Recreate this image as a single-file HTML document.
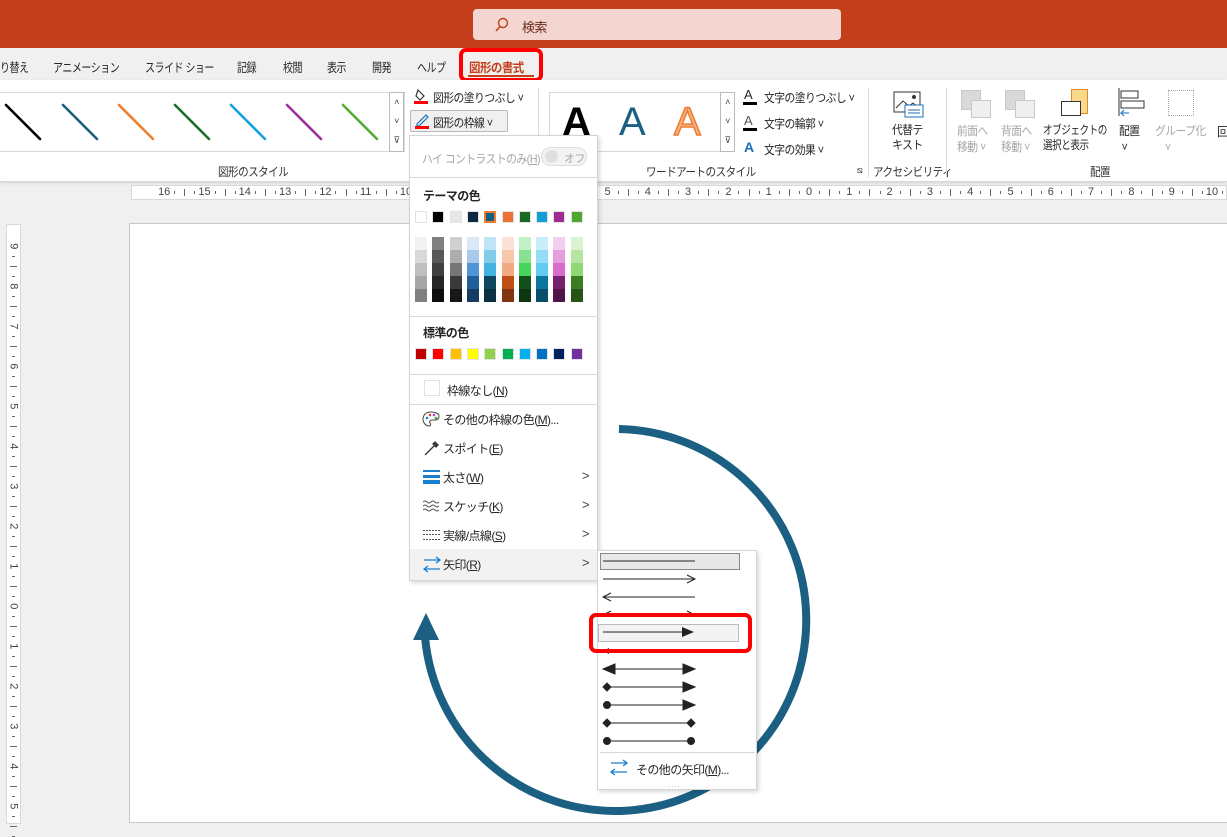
<!DOCTYPE html>
<html><head><meta charset="utf-8"><style>
*{margin:0;padding:0;box-sizing:border-box}
body{width:1227px;height:818px;overflow:hidden;background:#f0f0f0;font-family:"Liberation Sans","Noto Sans CJK JP",sans-serif;font-size:12px;color:#262626;position:relative;letter-spacing:-0.6px}
.a{position:absolute;white-space:nowrap}
.sx{transform:scaleX(.9);transform-origin:0 0}
.title{left:0;top:0;width:1227px;height:48px;background:#c43e1c}
.search{left:473px;top:9px;width:368px;height:31px;background:#f3d6cf;border-radius:4px}
.tabs{left:0;top:48px;width:1227px;height:32px;background:#f0f0f0}
.tab{top:57px;font-size:12.5px;color:#262626;transform:scaleX(.8);transform-origin:0 0}
.ribbon{left:0;top:80px;width:1227px;height:102px;background:#fff;border-bottom:1px solid #d8d8d8;box-shadow:0 1px 3px rgba(0,0,0,.12)}
.glabel{top:163px;font-size:12px;color:#333;transform:scaleX(.88);transform-origin:0 0}
.sep{top:88px;width:1px;height:90px;background:#dcdcdc}
.menu{left:409px;top:135px;width:189px;height:446px;background:#fff;border:1px solid #d4d4d4;box-shadow:2px 2px 4px rgba(0,0,0,.15)}
.mi{position:absolute;left:0;width:187px;height:29px;font-size:12px;color:#262626}
.mi span.t{position:absolute;left:34px;top:7px}
.chev{position:absolute;left:172px;top:6px;font-size:13px;color:#444}
.sw{position:absolute;width:12px;height:12px;border:1px solid #e2e2e2}
.sub{left:597px;top:550px;width:160px;height:240px;background:#fff;border:1px solid #d4d4d4;box-shadow:2px 2px 4px rgba(0,0,0,.15)}
.hr{position:absolute;height:1px;background:#d8d8d8}
.gray{color:#a6a6a6}
</style></head><body>
<div class="a title"></div>
<div class="a search"></div>
<svg class="a" style="left:494px;top:17px" width="16" height="16"><circle cx="9" cy="6" r="4.5" fill="none" stroke="#c43e1c" stroke-width="1.4"/><line x1="6" y1="9.5" x2="2" y2="14" stroke="#c43e1c" stroke-width="1.5"/></svg>
<div class="a" style="left:522px;top:17px;font-size:13px;color:#6b2a1c">検索</div>
<div class="a tabs"></div>
<div class="a tab" style="left:0">り替え</div>
<div class="a tab" style="left:53px">アニメーション</div>
<div class="a tab" style="left:145px">スライド ショー</div>
<div class="a tab" style="left:237px">記録</div>
<div class="a tab" style="left:283px">校閲</div>
<div class="a tab" style="left:327px">表示</div>
<div class="a tab" style="left:372px">開発</div>
<div class="a tab" style="left:417px">ヘルプ</div>
<div class="a" style="left:459px;top:48px;width:84px;height:34px;border:4px solid #ff0000;border-radius:7px"></div>
<div class="a" style="left:469px;top:57px;font-size:12.5px;font-weight:bold;color:#c43e1c;transform:scaleX(.92);transform-origin:0 0">図形の書式</div>
<div class="a" style="left:468px;top:75px;width:66px;height:2px;background:#c43e1c"></div>
<div class="a ribbon"></div>
<div class="a" style="left:0;top:92px;width:405px;height:60px;border:1px solid #d8d8d8;border-left:none"></div>
<svg class="a" style="left:0;top:95px" width="390" height="55">
<g stroke-width="2.6" stroke-linecap="round">
<line x1="6" y1="10" x2="40" y2="44" stroke="#000"/>
<line x1="63" y1="10" x2="97" y2="44" stroke="#1d5f82"/>
<line x1="119" y1="10" x2="153" y2="44" stroke="#ed7d31"/>
<line x1="175" y1="10" x2="209" y2="44" stroke="#1e6f2a"/>
<line x1="231" y1="10" x2="265" y2="44" stroke="#15a1dd"/>
<line x1="287" y1="10" x2="321" y2="44" stroke="#a0309a"/>
<line x1="343" y1="10" x2="377" y2="44" stroke="#56ad32"/></g></svg>
<div class="a" style="left:389px;top:92px;width:15px;height:60px;border:1px solid #bbb;background:#fff;font-size:9px;text-align:center;line-height:19px;color:#444">˄<br>˅<br>⊽</div>
<svg class="a" style="left:413px;top:87px" width="18" height="18"><path d="M5 3l6 6-4 4-4-4z" fill="none" stroke="#333" stroke-width="1.2"/><rect x="1" y="14" width="14" height="3" fill="#f00"/></svg>
<div class="a sx" style="left:433px;top:89px">図形の塗りつぶし ˅</div>
<div class="a" style="left:410px;top:110px;width:98px;height:22px;border:1px solid #b8b8b8;background:#f0f0f0;border-radius:2px"></div>
<svg class="a" style="left:414px;top:112px" width="18" height="18"><path d="M3 12L12 3l2 2-9 9H3z" fill="none" stroke="#1a6fb5" stroke-width="1.2"/><rect x="1" y="14" width="14" height="3" fill="#f00"/></svg>
<div class="a sx" style="left:433px;top:114px">図形の枠線 ˅</div>
<div class="a glabel" style="left:218px">図形のスタイル</div>
<div class="a sep" style="left:538px"></div>
<div class="a" style="left:549px;top:92px;width:185px;height:60px;border:1px solid #d8d8d8"></div>
<div class="a" style="left:562px;top:100px;font-size:40px;font-weight:bold;color:#000">A</div>
<div class="a" style="left:619px;top:100px;font-size:40px;color:#1d5f82">A</div>
<div class="a" style="left:674px;top:100px;font-size:40px;color:#f4b183;-webkit-text-stroke:1.5px #ed7d31">A</div>
<div class="a" style="left:720px;top:92px;width:15px;height:60px;border:1px solid #bbb;background:#fff;font-size:9px;text-align:center;line-height:19px;color:#444">˄<br>˅<br>⊽</div>
<div class="a" style="left:744px;top:87px;font-size:13px">A</div><div class="a" style="left:743px;top:102px;width:14px;height:3px;background:#000"></div>
<div class="a sx" style="left:764px;top:89px">文字の塗りつぶし ˅</div>
<div class="a" style="left:744px;top:113px;font-size:13px;color:#555">A</div><div class="a" style="left:743px;top:128px;width:14px;height:3px;background:#000"></div>
<div class="a sx" style="left:764px;top:115px">文字の輪郭 ˅</div>
<div class="a" style="left:744px;top:139px;font-size:14px;font-weight:bold;color:#1a6fb5">A</div>
<div class="a sx" style="left:764px;top:141px">文字の効果 ˅</div>
<div class="a glabel" style="left:646px">ワードアートのスタイル</div>
<div class="a" style="left:857px;top:165px;font-size:9px">⧅</div>
<div class="a sep" style="left:868px"></div>
<svg class="a" style="left:893px;top:90px" width="32" height="30"><rect x="1" y="2" width="26" height="20" fill="#fff" stroke="#333"/><path d="M3 18l7-7 6 5 4-3 6 5" fill="none" stroke="#333"/><circle cx="21" cy="7" r="2" fill="#333"/><rect x="12" y="15" width="18" height="12" fill="#fff" stroke="#1a6fb5"/><path d="M15 20h12M15 23h12" stroke="#1a6fb5"/></svg>
<div class="a sx" style="left:892px;top:123px;text-align:center;line-height:15px">代替テ<br>キスト</div>
<div class="a glabel" style="left:873px">アクセシビリティ</div>
<div class="a sep" style="left:946px"></div>
<div class="a" style="left:961px;top:90px;width:20px;height:20px;background:#d9d9d9;border:1px solid #c8c8c8"></div><div class="a" style="left:971px;top:100px;width:20px;height:18px;background:#efefef;border:1px solid #c8c8c8"></div>
<div class="a gray sx" style="left:957px;top:123px;line-height:16px">前面へ<br>移動 ˅</div>
<div class="a" style="left:1005px;top:90px;width:20px;height:20px;background:#d9d9d9;border:1px solid #c8c8c8"></div><div class="a" style="left:1015px;top:100px;width:20px;height:18px;background:#efefef;border:1px solid #c8c8c8"></div>
<div class="a gray sx" style="left:1001px;top:123px;line-height:16px">背面へ<br>移動 ˅</div>
<div class="a" style="left:1071px;top:89px;width:17px;height:25px;background:#fbd98a;border:1px solid #e08a2a"></div><div class="a" style="left:1061px;top:101px;width:20px;height:15px;background:#fff;border:1px solid #333"></div>
<div class="a" style="left:1043px;top:123px;line-height:15px;transform:scaleX(.8);transform-origin:0 0">オブジェクトの<br>選択と表示</div>
<svg class="a" style="left:1117px;top:88px" width="30" height="30"><path d="M2 0v28" stroke="#333"/><rect x="4" y="3" width="17" height="7" fill="#fff" stroke="#333"/><rect x="4" y="13" width="23" height="7" fill="#fff" stroke="#333"/><path d="M12 25H4l3-3M4 25l3 3" fill="none" stroke="#1a6fb5"/></svg>
<div class="a sx" style="left:1119px;top:123px;line-height:16px">配置<br>&nbsp;˅</div>
<div class="a" style="left:1168px;top:90px;width:26px;height:26px;border:1px dotted #aaa"></div>
<div class="a gray sx" style="left:1155px;top:123px;line-height:16px">グループ化<br>&nbsp;&nbsp;&nbsp;&nbsp;˅</div>
<div class="a" style="left:1217px;top:123px">回</div>
<div class="a glabel" style="left:1090px">配置</div>
<div class="a" style="left:131px;top:185px;width:1096px;height:15px;background:#fff;border:1px solid #d8d8d8;overflow:hidden" id="hr"></div>
<div class="a" style="left:6px;top:224px;width:15px;height:600px;background:#fff;border:1px solid #d8d8d8" id="vr"></div>
<div class="a" style="left:129px;top:223px;width:1100px;height:600px;background:#fff;border:1px solid #c8c8c8"></div>
<svg class="a" style="left:380px;top:400px" width="460" height="418">
<path d="M239 29 A191 191 0 1 1 45 237" fill="none" stroke="#1b5f82" stroke-width="8"/>
<path d="M33 240 L46 213 L59 240 Z" fill="#1b5f82"/>
</svg>
<div class="a menu">
<div class="a gray" style="left:12px;top:14px;transform:scaleX(.9);transform-origin:0 0">ハイ コントラストのみ(<u>H</u>)</div>
<div class="a" style="left:131px;top:11px;width:46px;height:19px;border:1px solid #ddd;border-radius:10px;background:#f3f3f3"></div>
<div class="a" style="left:135px;top:14px;width:13px;height:13px;border-radius:50%;background:#e0e0e0"></div>
<div class="a gray" style="left:154px;top:14px;font-size:11px">オフ</div>
<div class="hr" style="left:0;top:41px;width:187px"></div>
<div class="a" style="left:13px;top:51px;font-weight:bold">テーマの色</div>
<div id="sw"></div>
<div class="hr" style="left:0;top:180px;width:187px"></div>
<div class="a" style="left:13px;top:188px;font-weight:bold">標準の色</div>
<div class="hr" style="left:0;top:238px;width:187px"></div>
<div class="sw" style="left:14px;top:244px;width:16px;height:16px"></div>
<div class="a" style="left:37px;top:246px">枠線なし(<u>N</u>)</div>
<div class="hr" style="left:0;top:268px;width:187px"></div>
<div class="mi" style="top:268px"><svg class="a" style="left:12px;top:6px" width="18" height="18"><path d="M9 2C4 2 1 5 1 9c0 4 3 7 6 7 2 0 2-2 1-3s0-3 2-3h3c3 0 4-2 4-4 0-2-3-4-8-4z" fill="none" stroke="#444"/><circle cx="5" cy="8" r="1.3" fill="#1a7fcf"/><circle cx="8" cy="5" r="1.3" fill="#e04040"/><circle cx="12" cy="5" r="1.3" fill="#c040c0"/><circle cx="14" cy="8" r="1.3" fill="#40a040"/></svg><span class="t" style="left:33px">その他の枠線の色(<u>M</u>)...</span></div>
<div class="mi" style="top:297px"><svg class="a" style="left:13px;top:6px" width="18" height="18"><path d="M2 16l9-9M11 4l3 3M12 3l3 3-2 2-3-3z" stroke="#333" fill="none" stroke-width="1.3"/></svg><span class="t" style="left:33px">スポイト(<u>E</u>)</span></div>
<div class="mi" style="top:326px"><svg class="a" style="left:13px;top:7px" width="18" height="16"><rect x="0" y="1" width="17" height="2" fill="#1a7fcf"/><rect x="0" y="6" width="17" height="3" fill="#1a7fcf"/><rect x="0" y="11" width="17" height="4" fill="#1a7fcf"/></svg><span class="t" style="left:33px">太さ(<u>W</u>)</span><span class="chev">&gt;</span></div>
<div class="mi" style="top:355px"><svg class="a" style="left:13px;top:9px" width="18" height="12"><path d="M0 2q2-2 4 0t4 0 4 0 4 0M0 6q2-2 4 0t4 0 4 0 4 0M0 10q2-2 4 0t4 0 4 0 4 0" stroke="#555" fill="none"/></svg><span class="t" style="left:33px">スケッチ(<u>K</u>)</span><span class="chev">&gt;</span></div>
<div class="mi" style="top:384px"><svg class="a" style="left:13px;top:9px" width="18" height="12"><path d="M0 1.5h17M0 5.5h17M0 10.5h17" stroke="#555" stroke-dasharray="2 1"/></svg><span class="t" style="left:33px">実線/点線(<u>S</u>)</span><span class="chev">&gt;</span></div>
<div class="mi" style="top:413px;background:#f2f2f2;height:31px"><svg class="a" style="left:13px;top:6px" width="18" height="20"><path d="M1 5h16M13 2l4 3-4 3M17 14H1M5 11l-4 3 4 3" stroke="#1a7fcf" fill="none" stroke-width="1.3"/></svg><span class="t" style="left:33px">矢印(<u>R</u>)</span><span class="chev">&gt;</span></div>
</div>
<div class="a sub">
<div class="a" style="left:2px;top:2px;width:140px;height:17px;background:#e8e8e8;border:1px solid #888"></div>
<svg class="a" style="left:0;top:0" width="158" height="200"><g stroke="#222" stroke-width="1" fill="none">
<path d="M5 10h92"/>
<path d="M5 28h92M89 24l8 4-8 4"/>
<path d="M5 46h92M13 42l-8 4 8 4"/>
<path d="M13 60l-8 4M89 60l8 4"/>
<path d="M5 82h86"/></g>
<path d="M85 77l12 5-12 5z" fill="#222"/>
<path d="M5 100l6-3v6z" fill="#222"/>
<g stroke="#222" fill="#222"><path d="M5 118h92"/><path d="M5 118l12-5v10z M97 118l-12-5v10z"/>
<path d="M5 136h92"/><path d="M5 136l4-4 4 4-4 4z M97 136l-12-5v10z"/>
<path d="M5 154h92"/><circle cx="9" cy="154" r="3.5"/><path d="M97 154l-12-5v10z"/>
<path d="M5 172h92"/><path d="M5 172l4-4 4 4-4 4z M97 172l-4-4-4 4 4 4z"/>
<path d="M5 190h92"/><circle cx="9" cy="190" r="3.5"/><circle cx="93" cy="190" r="3.5"/></g></svg>
<div class="hr" style="left:2px;top:201px;width:155px"></div>
<svg class="a" style="left:12px;top:207px" width="18" height="20"><path d="M1 5h16M13 2l4 3-4 3M17 14H1M5 11l-4 3 4 3" stroke="#1a7fcf" fill="none" stroke-width="1.3"/></svg>
<div class="a" style="left:38px;top:210px">その他の矢印(<u>M</u>)...</div>
<div class="a" style="left:70px;top:229px;font-size:8px;color:#aaa;letter-spacing:1px">....</div>
</div>
<div class="a" style="left:589px;top:613px;width:163px;height:40px;border:4px solid #ff0000;border-radius:7px"></div>
<div class="a" style="left:598px;top:624px;width:141px;height:18px;border:1px solid #bbb;background:#f3f3f3"></div>
<svg class="a" style="left:598px;top:624px" width="140" height="18"><path d="M5 8h86" stroke="#222"/><path d="M84 3l12 5-12 5z" fill="#222"/></svg>
<script>
(function(){
var hr=document.getElementById('hr'),h='';
for(var n=-16;n<=11;n++){var x=808-131-40.3*(-n);
 h+='<span style="position:absolute;left:'+(x-7)+'px;top:0;width:14px;text-align:center;font-size:11px;line-height:13px;color:#444;letter-spacing:0">'+Math.abs(n)+'</span>';
 for(var k=1;k<4;k++){var tx=x+k*10.07;h+='<span style="position:absolute;left:'+tx+'px;top:'+(k==2?3:5)+'px;width:1px;height:'+(k==2?7:3)+'px;background:#666"></span>';}}
hr.innerHTML=h;
var vr=document.getElementById('vr'),v='';
for(var m=9;m>=-5;m--){var y=605-224-40*m;
 v+='<span style="position:absolute;left:0;top:'+(y-6)+'px;width:13px;height:12px;text-align:center;font-size:11px;line-height:12px;color:#444;transform:rotate(90deg)">'+Math.abs(m)+'</span>';
 for(var k=1;k<4;k++){var ty=y+k*10;v+='<span style="position:absolute;top:'+ty+'px;left:'+(k==2?3:5)+'px;height:1px;width:'+(k==2?7:3)+'px;background:#666"></span>';}}
vr.innerHTML=v;
var th=[['#fff','#f2f2f2','#d9d9d9','#bfbfbf','#a6a6a6','#808080'],['#000','#808080','#595959','#404040','#262626','#0d0d0d'],['#e8e8e8','#d0d0d0','#aeaeae','#757575','#3a3a3a','#171717'],['#0e2841','#dae9f8','#a6c9ec','#4e95d9','#215f9a','#153d64'],['#156082','#c0e4f5','#83cbeb','#44b3e1','#0f4761','#0b3040'],['#e97132','#fbe2d5','#f7c7ac','#f2aa84','#c04f15','#803510'],['#196b24','#c1f0c8','#84e291','#47d45a','#124f1a','#0c3511'],['#0f9ed5','#caedfb','#95dcf7','#61cbf3','#0b76a0','#074f6a'],['#a02b93','#f2cfee','#e59edd','#d86ecc','#77206d','#4f1549'],['#4ea72e','#d9f2d0','#b4e5a2','#8ed973','#3b7d23','#275317']];
var s='';
for(var i=0;i<10;i++){var x=5+i*17.3;
 s+='<div class="sw" style="left:'+x+'px;top:75px;background:'+th[i][0]+(i==4?';border:2px solid #ed7d31':'')+'"></div>';
 for(var j=1;j<6;j++)s+='<div style="position:absolute;left:'+x+'px;top:'+(101+(j-1)*13)+'px;width:12px;height:13px;background:'+th[i][j]+'"></div>';}
var st=['#c00000','#ff0000','#ffc000','#ffff00','#92d050','#00b050','#00b0f0','#0070c0','#002060','#7030a0'];
for(var i=0;i<10;i++)s+='<div class="sw" style="left:'+(5+i*17.3)+'px;top:212px;background:'+st[i]+'"></div>';
document.getElementById('sw').innerHTML=s;
})();
</script>
</body></html>
